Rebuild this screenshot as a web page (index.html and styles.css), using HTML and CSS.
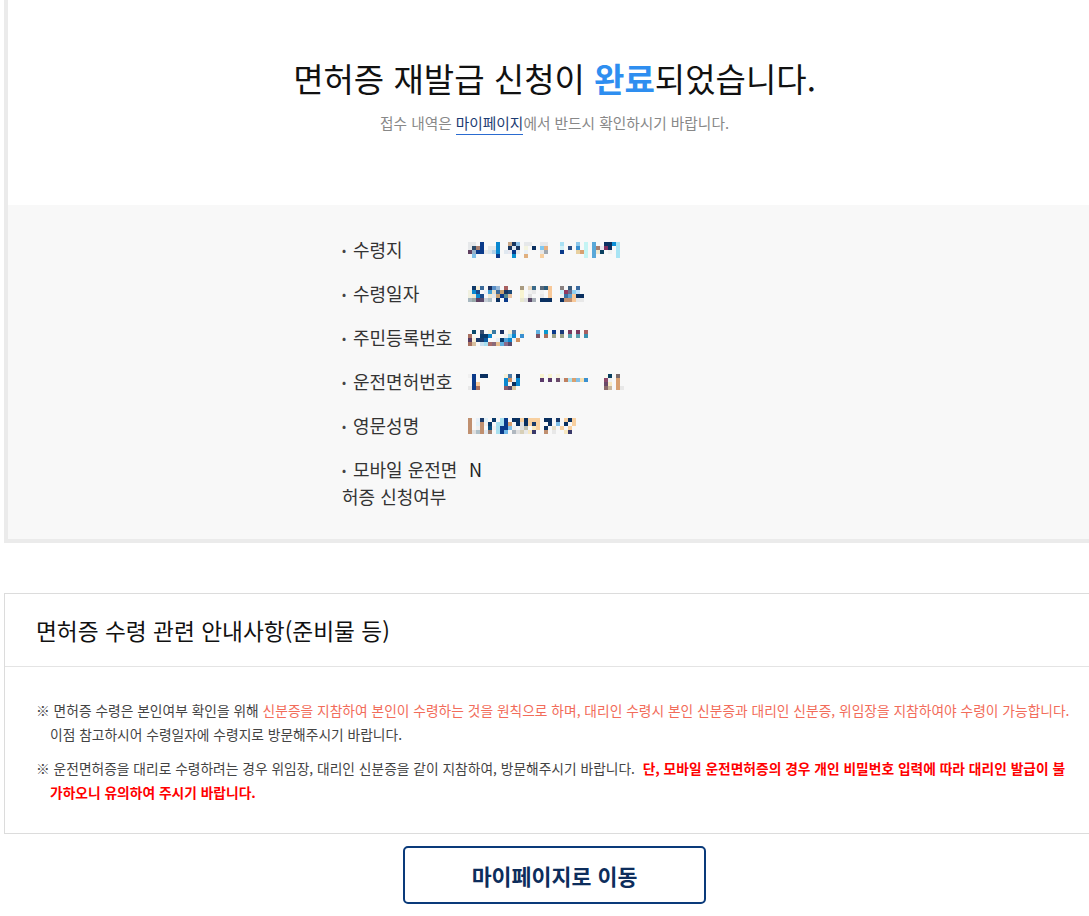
FILE: index.html
```html
<!DOCTYPE html>
<html lang="ko">
<head>
<meta charset="utf-8">
<title>면허증 재발급 신청 완료</title>
<link rel="stylesheet" href="styles.css">
</head>
<body>
<div class="page">
  <section class="result">
    <div class="result-head">
      <h1 class="result-title">면허증 재발급 신청이 <strong>완료</strong>되었습니다.</h1>
      <p class="result-sub">접수 내역은 <a class="link">마이페이지</a>에서 반드시 확인하시기 바랍니다.</p>
    </div>
    <div class="result-body">
      <dl class="info">
        <div class="info-row">
          <dt>수령지</dt>
          <dd>
            <svg class="px" width="164" height="16" viewBox="0 0 164 16">
              <rect x="0" y="0" fill="#e6e8ea"/><rect x="4" y="0" fill="#e6e8ea"/><rect x="12" y="0" fill="#0a3a8a"/><rect x="28" y="0" fill="#0a88d0"/><rect x="40" y="0" fill="#c8a888"/><rect x="44" y="0" fill="#17355f"/><rect x="48" y="0" fill="#8ec0e6"/><rect x="56" y="0" fill="#e6e8ea"/><rect x="60" y="0" fill="#e6e8ea"/><rect x="72" y="0" fill="#e6e8ea"/><rect x="76" y="0" fill="#e6e8ea"/><rect x="92" y="0" fill="#a8e0f4"/><rect x="108" y="0" fill="#8ec8ea"/><rect x="116" y="0" fill="#c4f4f4"/><rect x="124" y="0" fill="#5aa8d8"/><rect x="136" y="0" fill="#0a3060"/><rect x="140" y="0" fill="#0a3060"/><rect x="144" y="0" fill="#0a90d8"/><rect x="148" y="0" fill="#a8e4f4"/>
              <rect x="0" y="4" fill="#e6e8ea"/><rect x="4" y="4" fill="#2a4a6a"/><rect x="8" y="4" fill="#a88070"/><rect x="12" y="4" fill="#0a3a8a"/><rect x="20" y="4" fill="#e6e8ea"/><rect x="24" y="4" fill="#e6e8ea"/><rect x="28" y="4" fill="#0a88d0"/><rect x="40" y="4" fill="#17355f"/><rect x="44" y="4" fill="#e0e8f0"/><rect x="48" y="4" fill="#17355f"/><rect x="56" y="4" fill="#f4f4e0"/><rect x="64" y="4" fill="#0a3060"/><rect x="72" y="4" fill="#80c8f0"/><rect x="76" y="4" fill="#e8b080"/><rect x="92" y="4" fill="#d0f0f8"/><rect x="100" y="4" fill="#2a4a80"/><rect x="108" y="4" fill="#3a90d0"/><rect x="116" y="4" fill="#c4f4f4"/><rect x="124" y="4" fill="#5aa8d8"/><rect x="128" y="4" fill="#a88070"/><rect x="132" y="4" fill="#e8e8f0"/><rect x="136" y="4" fill="#803060"/><rect x="140" y="4" fill="#0a3060"/><rect x="148" y="4" fill="#a8e4f4"/>
              <rect x="0" y="8" fill="#604060"/><rect x="4" y="8" fill="#98b0c8"/><rect x="8" y="8" fill="#0a3a8a"/><rect x="12" y="8" fill="#0a3a8a"/><rect x="16" y="8" fill="#e8e8e8"/><rect x="20" y="8" fill="#d8e4ec"/><rect x="24" y="8" fill="#b0d0e8"/><rect x="28" y="8" fill="#0a88d0"/><rect x="36" y="8" fill="#e0e8f0"/><rect x="40" y="8" fill="#e8e8f0"/><rect x="44" y="8" fill="#0a3a8a"/><rect x="48" y="8" fill="#e8e8e8"/><rect x="56" y="8" fill="#e8f0f8"/><rect x="72" y="8" fill="#e8e8e8"/><rect x="76" y="8" fill="#a0a8b0"/><rect x="92" y="8" fill="#0a3a8a"/><rect x="108" y="8" fill="#e8d0a0"/><rect x="112" y="8" fill="#d8a070"/><rect x="116" y="8" fill="#c4f4f4"/><rect x="124" y="8" fill="#5aa8d8"/><rect x="128" y="8" fill="#f0e8d0"/><rect x="132" y="8" fill="#0a4060"/><rect x="140" y="8" fill="#f0f0f0"/><rect x="148" y="8" fill="#a8e4f4"/>
              <rect x="4" y="12" fill="#80c0e8"/><rect x="28" y="12" fill="#0a3a8a"/><rect x="44" y="12" fill="#0a90d0"/><rect x="56" y="12" fill="#e0b080"/><rect x="72" y="12" fill="#f8d0a0"/><rect x="116" y="12" fill="#c4f4f4"/><rect x="124" y="12" fill="#5aa8d8"/><rect x="148" y="12" fill="#a8e4f4"/>
            </svg>
          </dd>
        </div>
        <div class="info-row">
          <dt>수령일자</dt>
          <dd>
            <svg class="px" width="136" height="16" viewBox="0 0 136 16">
              <rect x="4" y="0" fill="#103a6a"/><rect x="8" y="0" fill="#f8f0d8"/><rect x="12" y="0" fill="#3a6a9a"/><rect x="20" y="0" fill="#1a3060"/><rect x="24" y="0" fill="#5a90c8"/><rect x="28" y="0" fill="#98b8d8"/><rect x="36" y="0" fill="#a86060"/><rect x="52" y="0" fill="#a89a80"/><rect x="60" y="0" fill="#e8d8c0"/><rect x="64" y="0" fill="#3a6a8a"/><rect x="72" y="0" fill="#5a6a7a"/><rect x="76" y="0" fill="#2a5a7a"/><rect x="80" y="0" fill="#f8c898"/><rect x="92" y="0" fill="#8a8080"/><rect x="100" y="0" fill="#3a5a7a"/><rect x="108" y="0" fill="#3a6aa0"/>
              <rect x="0" y="4" fill="#f0f0e0"/><rect x="4" y="4" fill="#0a88d0"/><rect x="8" y="4" fill="#1a4a8a"/><rect x="16" y="4" fill="#e8f0f8"/><rect x="20" y="4" fill="#40a0d8"/><rect x="24" y="4" fill="#e8e0c8"/><rect x="28" y="4" fill="#3a6a9a"/><rect x="32" y="4" fill="#c8a070"/><rect x="36" y="4" fill="#17355f"/><rect x="40" y="4" fill="#1a4a7a"/><rect x="52" y="4" fill="#f8f4d0"/><rect x="60" y="4" fill="#f0f0f0"/><rect x="64" y="4" fill="#e8e8e8"/><rect x="72" y="4" fill="#f0f0f0"/><rect x="80" y="4" fill="#f8c898"/><rect x="92" y="4" fill="#c8f0f8"/><rect x="96" y="4" fill="#903a60"/><rect x="100" y="4" fill="#6a6a8a"/><rect x="104" y="4" fill="#90d0f0"/><rect x="108" y="4" fill="#c0e0f8"/>
              <rect x="0" y="8" fill="#f0f0e0"/><rect x="4" y="8" fill="#f0e8d0"/><rect x="8" y="8" fill="#0a88d0"/><rect x="12" y="8" fill="#1a4a8a"/><rect x="20" y="8" fill="#f0e8d0"/><rect x="24" y="8" fill="#e0e8f0"/><rect x="28" y="8" fill="#c8a070"/><rect x="32" y="8" fill="#0a3a8a"/><rect x="36" y="8" fill="#5a8a90"/><rect x="40" y="8" fill="#e8c0a0"/><rect x="52" y="8" fill="#f8f4d0"/><rect x="60" y="8" fill="#e0e0e0"/><rect x="72" y="8" fill="#e8e8e8"/><rect x="80" y="8" fill="#f8c898"/><rect x="92" y="8" fill="#f0f0f0"/><rect x="96" y="8" fill="#3a70a0"/><rect x="100" y="8" fill="#60a0d0"/><rect x="104" y="8" fill="#f8c898"/><rect x="108" y="8" fill="#0a3060"/><rect x="112" y="8" fill="#0a3060"/>
              <rect x="0" y="12" fill="#a8b8c0"/><rect x="4" y="12" fill="#98a8a8"/><rect x="8" y="12" fill="#604060"/><rect x="12" y="12" fill="#5a4a6a"/><rect x="16" y="12" fill="#c8d0d8"/><rect x="20" y="12" fill="#b0c0c8"/><rect x="28" y="12" fill="#0a3060"/><rect x="36" y="12" fill="#0a3a8a"/><rect x="52" y="12" fill="#e8e8d0"/><rect x="56" y="12" fill="#e0e0e0"/><rect x="60" y="12" fill="#5a4a6a"/><rect x="64" y="12" fill="#a8b0b8"/><rect x="72" y="12" fill="#0a3060"/><rect x="76" y="12" fill="#0a3060"/><rect x="80" y="12" fill="#0a3060"/><rect x="92" y="12" fill="#0a3060"/><rect x="96" y="12" fill="#c09070"/><rect x="100" y="12" fill="#c09070"/><rect x="104" y="12" fill="#f8c898"/><rect x="108" y="12" fill="#e8e8e8"/><rect x="112" y="12" fill="#e8e8e8"/>
            </svg>
          </dd>
        </div>
        <div class="info-row">
          <dt>주민등록번호</dt>
          <dd>
            <svg class="px" width="124" height="16" viewBox="0 0 124 16">
              <rect x="4" y="0" fill="#0a4a6a"/><rect x="12" y="0" fill="#3a5070"/><rect x="20" y="0" fill="#f8f0d8"/><rect x="24" y="0" fill="#3a7aa0"/><rect x="32" y="0" fill="#1a3060"/><rect x="40" y="0" fill="#f8f0d8"/><rect x="44" y="0" fill="#4a7aa8"/><rect x="52" y="0" fill="#f8f4e0"/><rect x="68" y="0" fill="#60b0e0"/><rect x="76" y="0" fill="#0a98d0"/><rect x="84" y="0" fill="#0a3a8a"/><rect x="92" y="0" fill="#1a3a7a"/><rect x="100" y="0" fill="#7a3a60"/><rect x="108" y="0" fill="#7a3a60"/><rect x="116" y="0" fill="#a86060"/>
              <rect x="0" y="4" fill="#a87060"/><rect x="4" y="4" fill="#f8f8f0"/><rect x="12" y="4" fill="#0a3a6a"/><rect x="16" y="4" fill="#0a3a6a"/><rect x="20" y="4" fill="#0a88d0"/><rect x="28" y="4" fill="#f8f8f0"/><rect x="36" y="4" fill="#f0f0f0"/><rect x="40" y="4" fill="#a8e0f0"/><rect x="44" y="4" fill="#0a88d0"/><rect x="52" y="4" fill="#3a90d0"/><rect x="68" y="4" fill="#7a5060"/><rect x="76" y="4" fill="#a87060"/><rect x="84" y="4" fill="#98a088"/><rect x="92" y="4" fill="#98a088"/><rect x="100" y="4" fill="#5aa0b0"/><rect x="108" y="4" fill="#5aa0b0"/><rect x="116" y="4" fill="#3a90b0"/>
              <rect x="0" y="8" fill="#5a3a60"/><rect x="4" y="8" fill="#f8f0d8"/><rect x="8" y="8" fill="#1a3a6a"/><rect x="12" y="8" fill="#1a3a6a"/><rect x="16" y="8" fill="#0a5aa0"/><rect x="28" y="8" fill="#e8f0f8"/><rect x="32" y="8" fill="#0a3a6a"/><rect x="36" y="8" fill="#50a0d8"/><rect x="40" y="8" fill="#0a88d0"/><rect x="44" y="8" fill="#f0f0f0"/><rect x="48" y="8" fill="#d09060"/>
              <rect x="0" y="12" fill="#a87060"/><rect x="4" y="12" fill="#d8c0a0"/><rect x="12" y="12" fill="#c8e0f0"/><rect x="16" y="12" fill="#a8e0f0"/><rect x="20" y="12" fill="#a86a6a"/><rect x="24" y="12" fill="#8a6a7a"/><rect x="28" y="12" fill="#e8c090"/><rect x="32" y="12" fill="#60b0e0"/><rect x="36" y="12" fill="#8a6a8a"/><rect x="40" y="12" fill="#5a4a6a"/>
            </svg>
          </dd>
        </div>
        <div class="info-row">
          <dt>운전면허번호</dt>
          <dd>
            <svg class="px" width="156" height="16" viewBox="0 0 156 16">
              <rect x="0" y="0" fill="#f0f0f0"/><rect x="4" y="0" fill="#0a3a8a"/><rect x="12" y="0" fill="#0a3060"/><rect x="16" y="0" fill="#0a3060"/><rect x="36" y="0" fill="#f8f0d8"/><rect x="40" y="0" fill="#4a7aa8"/><rect x="48" y="0" fill="#0a3060"/><rect x="72" y="0" fill="#f8f4d0"/><rect x="80" y="0" fill="#f8f4d0"/><rect x="88" y="0" fill="#f8f4e0"/><rect x="136" y="0" fill="#f8f8f0"/><rect x="140" y="0" fill="#0a4060"/><rect x="148" y="0" fill="#7a6a6a"/>
              <rect x="4" y="4" fill="#0a3a8a"/><rect x="36" y="4" fill="#0a88d0"/><rect x="40" y="4" fill="#d09060"/><rect x="44" y="4" fill="#f0f0f0"/><rect x="48" y="4" fill="#0a88d0"/><rect x="72" y="4" fill="#5a3a6a"/><rect x="80" y="4" fill="#5a3a6a"/><rect x="88" y="4" fill="#6a4a6a"/><rect x="92" y="4" fill="#f0f0f0"/><rect x="96" y="4" fill="#c08060"/><rect x="100" y="4" fill="#a8e0f0"/><rect x="104" y="4" fill="#d8a070"/><rect x="108" y="4" fill="#80c0e8"/><rect x="112" y="4" fill="#f8e0b0"/><rect x="116" y="4" fill="#3a90d0"/><rect x="136" y="4" fill="#8a4a6a"/><rect x="140" y="4" fill="#f0f0f0"/><rect x="148" y="4" fill="#d8a070"/>
              <rect x="4" y="8" fill="#0a3a8a"/><rect x="8" y="8" fill="#f8c898"/><rect x="36" y="8" fill="#0a88d0"/><rect x="40" y="8" fill="#f8f8f8"/><rect x="44" y="8" fill="#0a3060"/><rect x="48" y="8" fill="#0a88d0"/><rect x="136" y="8" fill="#6a4a6a"/><rect x="140" y="8" fill="#f8e8c0"/><rect x="148" y="8" fill="#d8a070"/>
              <rect x="0" y="12" fill="#e8e8e8"/><rect x="4" y="12" fill="#0a3a8a"/><rect x="8" y="12" fill="#a87060"/><rect x="36" y="12" fill="#8a5a6a"/><rect x="40" y="12" fill="#5a4a6a"/><rect x="44" y="12" fill="#d8c8a0"/><rect x="136" y="12" fill="#8a6a6a"/><rect x="140" y="12" fill="#c8b8a0"/><rect x="148" y="12" fill="#d8a070"/><rect x="152" y="12" fill="#e8e8e8"/>
            </svg>
          </dd>
        </div>
        <div class="info-row">
          <dt>영문성명</dt>
          <dd>
            <svg class="px" width="110" height="16" viewBox="0 0 110 16">
              <rect x="0" y="0" fill="#c09070"/><rect x="8" y="0" fill="#e8f0f8"/><rect x="12" y="0" fill="#1a3a6a"/><rect x="16" y="0" fill="#e0f0f8"/><rect x="24" y="0" fill="#0a3a6a"/><rect x="32" y="0" fill="#a8e0f0"/><rect x="36" y="0" fill="#0a3a8a"/><rect x="44" y="0" fill="#0a3060"/><rect x="48" y="0" fill="#0a3060"/><rect x="52" y="0" fill="#f8d0a0"/><rect x="56" y="0" fill="#0a3060"/><rect x="60" y="0" fill="#f8d0a0"/><rect x="64" y="0" fill="#f8d0a0"/><rect x="68" y="0" fill="#f8d0a0"/><rect x="76" y="0" fill="#0a3060"/><rect x="80" y="0" fill="#0a3060"/><rect x="88" y="0" fill="#1a3a6a"/><rect x="96" y="0" fill="#f8d0a0"/><rect x="100" y="0" fill="#0a3060"/><rect x="104" y="0" fill="#f8d0a0"/>
              <rect x="0" y="4" fill="#c09070"/><rect x="8" y="4" fill="#e0f0f8"/><rect x="12" y="4" fill="#c09070"/><rect x="16" y="4" fill="#f0f0f0"/><rect x="20" y="4" fill="#0a3a6a"/><rect x="28" y="4" fill="#a8e0f0"/><rect x="32" y="4" fill="#a8e0f0"/><rect x="36" y="4" fill="#0a3a8a"/><rect x="40" y="4" fill="#d8a070"/><rect x="48" y="4" fill="#0a3060"/><rect x="52" y="4" fill="#e0e0e0"/><rect x="56" y="4" fill="#0a3060"/><rect x="60" y="4" fill="#f8d0a0"/><rect x="64" y="4" fill="#1a3a6a"/><rect x="68" y="4" fill="#f8d0a0"/><rect x="80" y="4" fill="#0a3060"/><rect x="88" y="4" fill="#80c0e8"/><rect x="96" y="4" fill="#0a3060"/><rect x="104" y="4" fill="#f8d0a0"/>
              <rect x="0" y="8" fill="#c09070"/><rect x="8" y="8" fill="#f0f0f0"/><rect x="12" y="8" fill="#c09070"/><rect x="20" y="8" fill="#0a5080"/><rect x="24" y="8" fill="#f0f0f0"/><rect x="28" y="8" fill="#a8e0f0"/><rect x="32" y="8" fill="#0a3a8a"/><rect x="36" y="8" fill="#0a3a8a"/><rect x="40" y="8" fill="#80c0e8"/><rect x="44" y="8" fill="#f0f0f0"/><rect x="52" y="8" fill="#e0e0e0"/><rect x="56" y="8" fill="#c0c0b0"/><rect x="64" y="8" fill="#f8e8c0"/><rect x="68" y="8" fill="#f8d0a0"/><rect x="76" y="8" fill="#0a3060"/><rect x="84" y="8" fill="#e8e0c8"/><rect x="92" y="8" fill="#f8d0a0"/><rect x="100" y="8" fill="#f8d0a0"/>
              <rect x="0" y="12" fill="#c09070"/><rect x="4" y="12" fill="#e0e0e0"/><rect x="8" y="12" fill="#b0c0c8"/><rect x="12" y="12" fill="#c09070"/><rect x="16" y="12" fill="#e0e8f0"/><rect x="20" y="12" fill="#a08070"/><rect x="28" y="12" fill="#a8e0f0"/><rect x="32" y="12" fill="#0a3a8a"/><rect x="36" y="12" fill="#70b8e8"/><rect x="44" y="12" fill="#b0b8c0"/><rect x="48" y="12" fill="#e0e0e0"/><rect x="52" y="12" fill="#d8d0b8"/><rect x="56" y="12" fill="#e8e8e8"/><rect x="60" y="12" fill="#f8e8c0"/><rect x="64" y="12" fill="#3a3a6a"/><rect x="76" y="12" fill="#c09070"/><rect x="84" y="12" fill="#e8e8e8"/><rect x="96" y="12" fill="#f8e8c0"/><rect x="100" y="12" fill="#3a3a6a"/>
            </svg>
          </dd>
        </div>
        <div class="info-row">
          <dt>모바일 운전면허증 신청여부</dt>
          <dd class="text">N</dd>
        </div>
      </dl>
    </div>
  </section>

  <section class="notice">
    <h2 class="notice-title">면허증 수령 관련 안내사항(준비물 등)</h2>
    <div class="notice-body">
      <p>※ 면허증 수령은 본인여부 확인을 위해 <span class="warn">신분증을 지참하여 본인이 수령하는 것을 원칙으로 하며, 대리인 수령시 본인 신분증과 대리인 신분증, 위임장을 지참하여야 수령이 가능합니다.</span><br>이점 참고하시어 수령일자에 수령지로 방문해주시기 바랍니다.</p>
      <p>※ 운전면허증을 대리로 수령하려는 경우 위임장, 대리인 신분증을 같이 지참하여, 방문해주시기 바랍니다. &nbsp;<strong class="alert">단, 모바일 운전면허증의 경우 개인 비밀번호 입력에 따라 대리인 발급이 불<br>가하오니 유의하여 주시기 바랍니다.</strong></p>
    </div>
  </section>

  <div class="actions">
    <button class="btn" type="button">마이페이지로 이동</button>
  </div>
</div>
</body>
</html>
```

FILE: styles.css
```css
html, body {
  margin: 0;
  padding: 0;
  background: #ffffff;
  overflow: hidden;
}

body {
  font-family: "Noto Sans CJK KR", "Noto Sans", sans-serif;
  color: #222;
}

.page {
  width: 1101px;
  margin-left: 4px;
}

/* ---------- result box ---------- */
.result {
  border: 4px solid #ebebeb;
  border-top: none;
}

.result-head {
  background: #fff;
  padding: 58px 0 72px;
  text-align: center;
}

.result-title {
  margin: 0;
  font-size: 33px;
  line-height: 40px;
  font-weight: 400;
  color: #111;
}

.result-title strong {
  color: #2e8ef0;
  font-weight: 700;
}

.result-sub {
  margin: 15px 0 0;
  font-size: 14.7px;
  line-height: 20px;
  color: #888;
}

.link {
  color: #1c3b72;
  border-bottom: 1px solid #2a6bd0;
  padding-bottom: 1px;
  text-decoration: none;
}

.result-body {
  background: #f8f8f8;
  padding: 31px 0 29px;
}

.info {
  width: 425px;
  margin: 0 auto;
  display: flex;
  flex-direction: column;
  gap: 17px;
}

.info-row {
  display: grid;
  grid-template-columns: 120px auto;
  column-gap: 6px;
  align-items: start;
}

.info dt {
  font-size: 18px;
  line-height: 27px;
  color: #333;
}

.info dt::before {
  content: "•";
  display: inline-block;
  vertical-align: top;
  width: 11px;
  font-size: 12px;
  line-height: 27px;
  color: #444;
}

.info dd {
  margin: 0;
  height: 27px;
  display: flex;
  align-items: center;
}

.info dd.text {
  font-size: 18px;
  line-height: 27px;
  color: #222;
  padding-left: 1px;
}

.px {
  display: block;
  shape-rendering: crispEdges;
}

.px rect {
  width: 4px;
  height: 4px;
}

/* ---------- notice box ---------- */
.notice {
  margin-top: 50px;
  border: 1px solid #dcdcdc;
}

.notice-title {
  margin: 0;
  height: 72px;
  display: flex;
  align-items: center;
  padding-left: 31px;
  font-size: 22.7px;
  font-weight: 400;
  color: #111;
  border-bottom: 1px solid #e4e4e4;
}

.notice-body {
  padding: 31px 20px 29px 31px;
}

.notice-body p {
  margin: 0;
  padding-left: 14px;
  text-indent: -14px;
  font-size: 13.75px;
  line-height: 24px;
  color: #444;
  white-space: nowrap;
}

.notice-body p + p {
  margin-top: 10px;
}

.warn {
  color: #f26c5a;
}

.alert {
  color: #ff0000;
  font-weight: 700;
}

/* ---------- actions ---------- */
.actions {
  display: flex;
  justify-content: center;
  margin-top: 12px;
}

.btn {
  width: 303px;
  height: 58px;
  background: #fff;
  border: 2px solid #0a3a7a;
  border-radius: 5px;
  font-family: "Noto Sans CJK KR", "Noto Sans", sans-serif;
  font-size: 21.7px;
  font-weight: 700;
  color: #0d2d5c;
  cursor: pointer;
}
```
